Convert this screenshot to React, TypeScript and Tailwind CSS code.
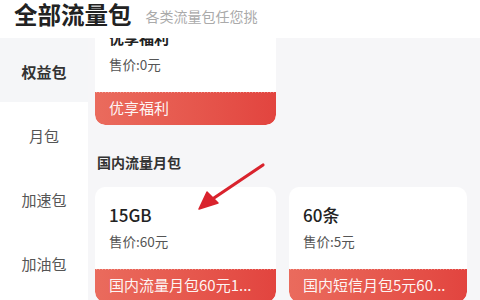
import React from "react";

const Card = ({ title, price, tag, titleCls }: { title: string; price: string; tag: string; titleCls: string }) => (
  <div className="bg-white rounded-[10px] overflow-hidden flex flex-col">
    <div className="pl-[14px] pt-[18px]">
      <div className={titleCls}>{title}</div>
      <div className="mt-[6px] text-[13.5px] leading-[20px] text-[#555]">{price}</div>
    </div>
    <div className="h-[17px]" />
    <div className="relative h-[34px] rounded-b-[10px] bg-gradient-to-r from-[#ea6b5d] to-[#e2443f] flex items-center pl-[14px] pr-[6px]">
      <div className="absolute left-0 right-0 top-0 h-[3px] bg-[radial-gradient(circle_at_1.5px_0px,#ffffff_1.3px,transparent_1.6px)] bg-[length:3px_3px] bg-repeat-x" />
      <span className="text-[15px] text-white/95 whitespace-nowrap overflow-hidden">{tag}</span>
    </div>
  </div>
);

export default function App() {
  return (
    <div className="relative w-[480px] h-[300px] overflow-hidden bg-white font-['Noto_Sans_CJK_SC','Noto_Sans',sans-serif]">
      <div className="h-[38px] pb-[10px] flex items-center pl-[14px]">
        <span className="text-[23.5px] leading-[28px] font-bold text-[#222]">全部流量包</span>
        <span className="ml-[14px] mt-[4px] text-[14px] text-[#aaa]">各类流量包任您挑</span>
      </div>
      <div className="flex h-[262px]">
        <div className="w-[88px] flex flex-col shrink-0">
          <div className="h-[64px] pt-[4px] bg-[#f5f6f8] flex items-center justify-center text-[15px] font-bold text-[#333]">权益包</div>
          <div className="h-[64px] pt-[4px] flex items-center justify-center text-[15px] text-[#555]">月包</div>
          <div className="h-[64px] pt-[4px] flex items-center justify-center text-[15px] text-[#555]">加速包</div>
          <div className="h-[64px] pt-[4px] flex items-center justify-center text-[15px] text-[#555]">加油包</div>
        </div>
        <div className="flex-1 bg-[#f6f6f8] overflow-hidden pl-[7px]">
          <div className="-mt-[28px] grid grid-cols-[181px_178px] gap-x-[13px]">
            <Card title="优享福利" price="售价:0元" tag="优享福利" titleCls="text-[15px] leading-[20px] font-bold text-[#222]" />
          </div>
          <div className="mt-[27px] pl-[2px] text-[14px] leading-[20px] font-bold text-[#333]">国内流量月包</div>
          <div className="mt-[15px] grid grid-cols-[181px_178px] gap-x-[13px]">
            <Card title="15GB" price="售价:60元" tag="国内流量月包60元1..." titleCls="text-[17px] leading-[20px] font-medium text-[#222]" />
            <Card title="60条" price="售价:5元" tag="国内短信月包5元60..." titleCls="text-[17px] leading-[20px] font-medium text-[#222]" />
          </div>
        </div>
      </div>
      <svg className="absolute left-0 top-0 pointer-events-none" width="480" height="300" viewBox="0 0 480 300">
        <path d="M263 165 L211 200" stroke="#d9232d" strokeWidth="3.2" strokeLinecap="round" />
        <path d="M199 209 L207 192 L218 203 Z" fill="#d9232d" stroke="#d9232d" strokeWidth="1.5" strokeLinejoin="round" />
      </svg>
    </div>
  );
}
